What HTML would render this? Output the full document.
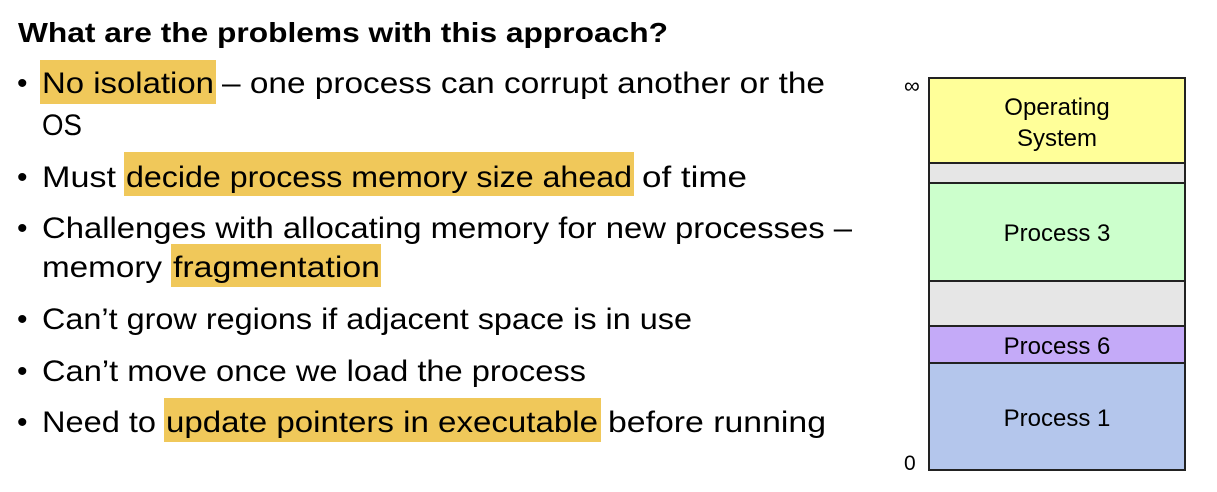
<!DOCTYPE html><html><head><style>body{margin:0;background:#fff}</style></head><body>
<svg width="1217" height="492" xmlns="http://www.w3.org/2000/svg" style="display:block">
<g fill="#f0c85a">
<rect x="40" y="60" width="176" height="44"/>
<rect x="124" y="152" width="510" height="44"/>
<rect x="171" y="244" width="210" height="43"/>
<rect x="164" y="398" width="437" height="44"/>
</g>
<g font-family="Liberation Sans, sans-serif" fill="#000" font-size="30" lengthAdjust="spacingAndGlyphs">
<text x="18" y="42" font-weight="bold" font-size="28" textLength="650" lengthAdjust="spacingAndGlyphs">What are the problems with this approach?</text>
<text x="17" y="93">•</text><text x="17" y="187">•</text><text x="17" y="238">•</text><text x="17" y="329">•</text><text x="17" y="381">•</text><text x="17" y="432">•</text>
<text x="42" y="93" textLength="172" lengthAdjust="spacingAndGlyphs">No isolation</text>
<text x="222" y="93" textLength="603" lengthAdjust="spacingAndGlyphs">– one process can corrupt another or the</text>
<text x="42" y="135" textLength="40" lengthAdjust="spacingAndGlyphs">OS</text>
<text x="42" y="187" textLength="74" lengthAdjust="spacingAndGlyphs">Must</text>
<text x="126" y="187" textLength="506" lengthAdjust="spacingAndGlyphs">decide process memory size ahead</text>
<text x="642" y="187" textLength="105" lengthAdjust="spacingAndGlyphs">of time</text>
<text x="42" y="238" textLength="810" lengthAdjust="spacingAndGlyphs">Challenges with allocating memory for new processes –</text>
<text x="42" y="277" textLength="120" lengthAdjust="spacingAndGlyphs">memory</text>
<text x="173" y="277" textLength="207" lengthAdjust="spacingAndGlyphs">fragmentation</text>
<text x="42" y="329" textLength="650" lengthAdjust="spacingAndGlyphs">Can’t grow regions if adjacent space is in use</text>
<text x="42" y="381" textLength="544" lengthAdjust="spacingAndGlyphs">Can’t move once we load the process</text>
<text x="42" y="432" textLength="114" lengthAdjust="spacingAndGlyphs">Need to</text>
<text x="166" y="432" textLength="432" lengthAdjust="spacingAndGlyphs">update pointers in executable</text>
<text x="608" y="432" textLength="218" lengthAdjust="spacingAndGlyphs">before running</text>
</g>
<g stroke="#222" stroke-width="2">
<rect x="929" y="78" width="256" height="85" fill="#ffff99"/>
<rect x="929" y="163" width="256" height="20" fill="#e6e6e6"/>
<rect x="929" y="183" width="256" height="98" fill="#ccffcc"/>
<rect x="929" y="281" width="256" height="45" fill="#e6e6e6"/>
<rect x="929" y="326" width="256" height="37" fill="#c4aaf8"/>
<rect x="929" y="363" width="256" height="107" fill="#b4c6ec"/>
</g>
<g font-family="Liberation Sans, sans-serif" font-size="24" text-anchor="middle" fill="#000">
<text x="1057" y="115">Operating</text>
<text x="1057" y="146">System</text>
<text x="1057" y="241">Process 3</text>
<text x="1057" y="354">Process 6</text>
<text x="1057" y="426">Process 1</text>
</g>
<g font-family="Liberation Sans, sans-serif" fill="#000">
<text x="904" y="93" font-size="22">∞</text>
<text x="904" y="470" font-size="21">0</text>
</g>
</svg>
</body></html>
